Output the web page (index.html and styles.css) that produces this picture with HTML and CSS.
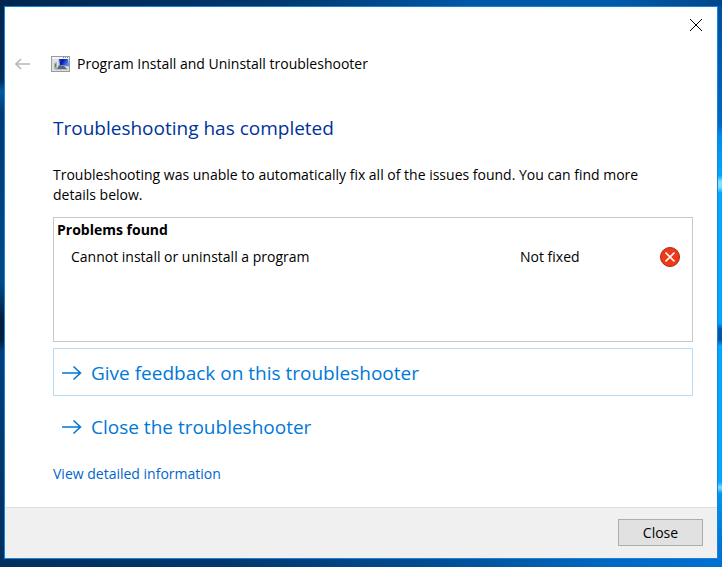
FILE: index.html
```
<!DOCTYPE html>
<html lang="en">
<head>
	<meta charset="utf-8">
	<title>Program Install and Uninstall troubleshooter</title>
	<link rel="stylesheet" href="styles.css">
</head>
<body>

<div class="window">
	<div class="titlebar">
		<button class="close" aria-label="Close window">
			<svg width="12" height="12" viewBox="0 0 12 12"><path d="M0 0L12 12M12 0L0 12"/></svg>
		</button>
	</div>

	<header class="header">
		<button class="back" aria-label="Back" disabled>
			<svg width="16" height="12" viewBox="0 0 16 12"><path d="M15 6H1M6 1L1 6L6 11"/></svg>
		</button>
		<svg class="app-icon" width="20" height="16" viewBox="0 0 20 16">
			<defs>
				<linearGradient id="screen" x1="0" y1="0" x2="1" y2="0.4">
					<stop offset="0" stop-color="#2a48b8"/>
					<stop offset="0.4" stop-color="#0418b8"/>
					<stop offset="1" stop-color="#4f8af0"/>
				</linearGradient>
			</defs>
			<rect x="0.5" y="0.5" width="18" height="15" fill="#dcdfe4" stroke="#9a9a9a"/>
			<rect x="1" y="1" width="17" height="2" fill="#f4f4f4"/>
			<path d="M12 1.5h1M14 1.5h1M16 1.5h1" stroke="#7587a8"/>
			<!-- tower -->
			<path d="M3 7l3-1v8l-3-1z" fill="#a9afa9"/>
			<path d="M4.5 8v3" stroke="#4d8a55"/>
			<!-- monitor -->
			<path d="M7 3h10l1 8-10-1z" fill="#b4c2dc"/>
			<path d="M8 3h9l1 7-9-1z" fill="url(#screen)"/>
			<path d="M8 9l5 1 4 4-11-1z" fill="#5d6677"/>
			<path d="M6 13.5h11" stroke="#b9bdc2"/>
		</svg>
		<span>Program Install and Uninstall troubleshooter</span>
	</header>

	<main class="content">
		<h1>Troubleshooting has completed</h1>
		<p>Troubleshooting was unable to automatically fix all of the issues found. You can find more details below.</p>

		<div class="problems">
			<table>
				<thead>
					<tr><th colspan="3">Problems found</th></tr>
				</thead>
				<tbody>
					<tr>
						<td class="name">Cannot install or uninstall a program</td>
						<td class="status">Not fixed</td>
						<td class="mark">
							<svg width="20" height="20" viewBox="0 0 20 20" role="img" aria-label="Error">
								<circle cx="10" cy="10" r="9.5" fill="#ee3a17" stroke="#a82c1c"/>
								<path d="M5.5 5.5L14.5 14.5M14.5 5.5L5.5 14.5" stroke="#fff" stroke-width="1.7"/>
							</svg>
						</td>
					</tr>
				</tbody>
			</table>
		</div>

		<button class="command focused">
			<svg width="20" height="16" viewBox="0 0 20 16"><path d="M0 8H18.5M11.5 1.5L18.5 8L11.5 14.5"/></svg>
			Give feedback on this troubleshooter
		</button>
		<button class="command">
			<svg width="20" height="16" viewBox="0 0 20 16"><path d="M0 8H18.5M11.5 1.5L18.5 8L11.5 14.5"/></svg>
			Close the troubleshooter
		</button>

		<a class="details" href="#">View detailed information</a>
	</main>

	<footer class="footer">
		<button class="push">Close</button>
	</footer>
</div>

</body>
</html>
```

FILE: styles.css
```
* {
	box-sizing: border-box;
}

/* desktop wallpaper showing round the window */
body {
	display: flex;
	min-height: 100vh;
	margin: 0;
	padding: 6px 4px 8px;
	font: 14px/20px "Segoe UI", "Open Sans", "Noto Sans", sans-serif;
	color: #000;
	background:
		linear-gradient(90deg, #00264f, #003a70 40%, #0058a8 65%, #005bab 85%, #00478a) top / 100% 6px no-repeat,
		linear-gradient(90deg, #00305f, #00376c 30%, #004d92 60%, #0068c4 85%, #0070d0) bottom / 100% 8px no-repeat,
		linear-gradient(#004f9c, #0068c4 22%, #008cf0 24%, #00a8ff 31%, #7fe0ff 32%, #7fe0ff 33%, #00a8ff 34%, #00a8ff 57%, #0058ac 58%, #0058ac 60%, #00a8ff 61%, #00a8ff 85%, #7fe0ff 86%, #0098f0 87%, #0078dc 95%, #0070d0) right / 4px 100% no-repeat,
		linear-gradient(#00264f, #002b57 14%, #0058a0 16%, #003a73 20%, #004a8a 50%, #001f42 56%, #001f42 60%, #004080 62%, #002f5c) left / 4px 100% no-repeat,
		#004a8a;
}

button {
	padding: 0;
	border: 0;
	background: none;
	font: inherit;
	color: inherit;
}

svg {
	display: block;
	fill: none;
}

.window {
	display: flex;
	flex: 1;
	flex-direction: column;
	border: 1px solid #1883d7;
	background: #fff;
}

.titlebar {
	display: flex;
	justify-content: flex-end;
}

.close {
	display: flex;
	align-items: center;
	justify-content: center;
	width: 42px;
	height: 36px;
}

.close svg {
	stroke: #000;
}

.header {
	display: flex;
	align-items: center;
	height: 41px;
	padding-left: 10px;
}

.back svg {
	stroke: #b8b8b8;
	stroke-width: 1.6;
}

.app-icon {
	margin: 0 6px 0 20px;
}

.content {
	display: flex;
	flex: 1;
	flex-direction: column;
	padding: 30px 24px 23px 48px;
}

h1 {
	margin: 0 0 23px;
	font-size: 19px;
	font-weight: normal;
	line-height: 28px;
	color: #003399;
}

p {
	margin: 0 0 12px;
	padding-right: 24px;
}

.problems {
	flex: 1;
	min-height: 125px;
	margin-bottom: 6px;
	border: 1px solid #c8c8c8;
}

table {
	width: 100%;
	border-collapse: collapse;
}

th {
	padding: 2px 3px 7px;
	text-align: left;
}

td {
	padding: 0;
}

.name {
	padding-left: 17px;
}

.status {
	width: 140px;
}

.mark {
	width: 32px;
}

.command {
	display: flex;
	align-items: center;
	gap: 9px;
	height: 48px;
	margin-bottom: 6px;
	padding: 2px 8px 0;
	border: 1px solid transparent;
	font-size: 19px;
	color: #0078d7;
}

.command.focused {
	border-color: #b8dcf4;
}

.command svg {
	stroke: #0078d7;
	stroke-width: 1.6;
}

.details {
	align-self: flex-start;
	margin-top: 8px;
	color: #0066cc;
	text-decoration: none;
}

.footer {
	display: flex;
	justify-content: flex-end;
	padding: 11px 14px 12px;
	border-top: 1px solid #dfdfdf;
	background: #f0f0f0;
}

.push {
	width: 85px;
	height: 27px;
	border: 1px solid #adadad;
	background: #e1e1e1;
}
```
